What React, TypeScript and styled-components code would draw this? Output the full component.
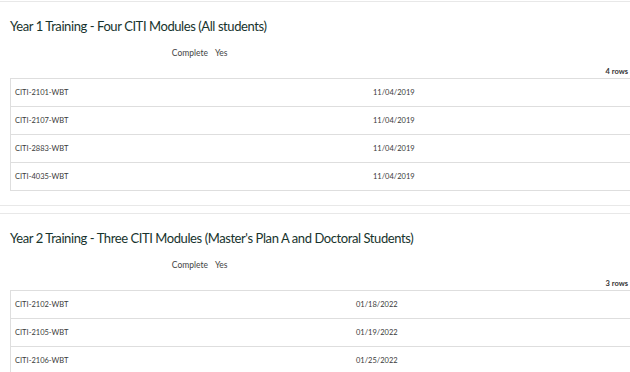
import styled, { createGlobalStyle } from "styled-components";

const GlobalStyle = createGlobalStyle`
    body {
        margin: 0;
        background: #fff;
        font-family: Lato, "Open Sans", Arial, sans-serif;
        overflow: hidden;
    }
`;

const Page = styled.div`
    display: flex;
    flex-direction: column;
    gap: 7px;
    padding-top: 1px;
    width: 630px;
`;

const Section = styled.section`
    border-top: 1px solid #e8e8e8;
    border-bottom: 1px solid #e8e8e8;
    padding-bottom: 14px;
`;

const Title = styled.h2`
    margin: 0;
    padding: 14px 0 0 10px;
    height: 20px;
    line-height: 20px;
    font-size: 13px;
    font-weight: 400;
    letter-spacing: -0.42px;
    color: #17332d;
    white-space: nowrap;
`;

const Meta = styled.dl`
    display: grid;
    grid-template-columns: 208px auto;
    column-gap: 7px;
    margin: 10px 0 0;
    height: 14px;
    line-height: 14px;
    font-size: 8.5px;
    color: #444;

    dt {
        text-align: right;
    }
    dd {
        margin: 0;
    }
`;

const RowCount = styled.div`
    margin-top: 7px;
    height: 10px;
    line-height: 10px;
    padding-right: 2px;
    text-align: right;
    font-size: 7.5px;
    font-weight: 700;
    color: #333;
`;

const Table = styled.table<{ $first: number }>`
    margin: 1px 0 0 10px;
    width: 620px;
    border-collapse: collapse;
    border: 1px solid #dedede;
    border-right: none;
    font-size: 7.5px;
    color: #3a3a3a;

    td {
        height: 27px;
        padding: 0 0 0 4px;
        border-bottom: 1px solid #dedede;
        vertical-align: middle;
    }
    td:first-child {
        width: ${(p) => p.$first}px;
    }
`;

type Module = { code: string; date: string };

const trainings: { title: string; col: number; modules: Module[] }[] = [
    {
        title: "Year 1 Training - Four CITI Modules (All students)",
        col: 354,
        modules: [
            { code: "CITI-2101-WBT", date: "11/04/2019" },
            { code: "CITI-2107-WBT", date: "11/04/2019" },
            { code: "CITI-2883-WBT", date: "11/04/2019" },
            { code: "CITI-4035-WBT", date: "11/04/2019" },
        ],
    },
    {
        title: "Year 2 Training - Three CITI Modules (Master's Plan A and Doctoral Students)",
        col: 337,
        modules: [
            { code: "CITI-2102-WBT", date: "01/18/2022" },
            { code: "CITI-2105-WBT", date: "01/19/2022" },
            { code: "CITI-2106-WBT", date: "01/25/2022" },
        ],
    },
];

function App() {
    return (
        <>
            <GlobalStyle />
            <Page>
                {trainings.map((t) => (
                    <Section key={t.title}>
                        <Title>{t.title}</Title>
                        <Meta>
                            <dt>Complete</dt>
                            <dd>Yes</dd>
                        </Meta>
                        <RowCount>{t.modules.length} rows</RowCount>
                        <Table $first={t.col}>
                            <tbody>
                                {t.modules.map((m) => (
                                    <tr key={m.code}>
                                        <td>{m.code}</td>
                                        <td>{m.date}</td>
                                    </tr>
                                ))}
                            </tbody>
                        </Table>
                    </Section>
                ))}
            </Page>
        </>
    );
}

export default App;
